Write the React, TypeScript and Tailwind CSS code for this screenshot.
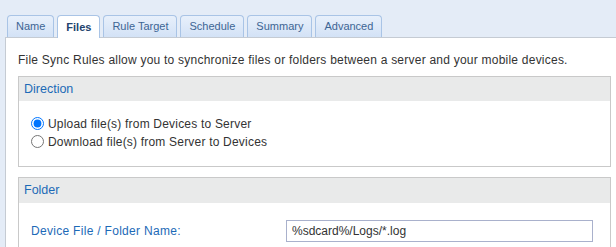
export default function App() {
  const tabs = ['Name', 'Files', 'Rule Target', 'Schedule', 'Summary', 'Advanced']
  return (
    <div
      className="w-[616px] h-[247px] overflow-hidden bg-[#e4ecf7] pl-[5px] pt-[15px]"
      style={{ fontFamily: '"Liberation Sans", Arial, sans-serif' }}
    >
      {/* Tab strip */}
      <div className="flex gap-[3px] pl-[2px] h-[22px] relative z-10">
        {tabs.map((t) => {
          const active = t === 'Files'
          return (
            <div
              key={t}
              className={
                active
                  ? 'h-[23px] px-[8px] flex items-center rounded-t-[4px] border border-b-0 border-[#a9c4e6] bg-white text-[11px] font-bold text-[#23446e]'
                  : 'h-[22px] px-[8px] flex items-center rounded-t-[4px] border border-b-0 border-[#a9c4e6] bg-gradient-to-b from-[#e8f0fb] to-[#d3e2f6] text-[11px] text-[#3d6594]'
              }
            >
              {t}
            </div>
          )
        })}
      </div>

      {/* Panel */}
      <div className="w-[618px] h-[240px] bg-white border-l border-t border-[#c5cbd3] px-[12px] pt-[14px]">
        <p className="text-[12px] text-[#333] leading-[16px] tracking-[0.23px]">
          File Sync Rules allow you to synchronize files or folders between a server and your mobile devices.
        </p>

        {/* Direction */}
        <div className="mt-[8px] h-[91px] border border-[#c9c9c9]">
          <div className="h-[24px] bg-[#e9eaea] flex items-center px-[5px] text-[12.5px] text-[#1d6ab7]">
            Direction
          </div>
          <div className="pt-[16px] pl-[12px] flex flex-col gap-[5px] text-[12px] text-[#333] tracking-[0.2px]">
            <label className="flex items-center gap-[4px] h-[13px]">
              <input type="radio" name="dir" defaultChecked className="m-0 w-[13px] h-[13px]" />
              Upload file(s) from Devices to Server
            </label>
            <label className="flex items-center gap-[4px] h-[13px]">
              <input type="radio" name="dir" className="m-0 w-[13px] h-[13px]" />
              Download file(s) from Server to Devices
            </label>
          </div>
        </div>

        {/* Folder */}
        <div className="mt-[10px] h-[90px] border border-[#c9c9c9]">
          <div className="h-[25px] bg-[#e9eaea] flex items-center px-[5px] text-[12.5px] text-[#1d6ab7]">
            Folder
          </div>
          <div className="pt-[17px] pl-[12px] flex items-center">
            <span className="w-[255px] text-[12px] text-[#1d6ab7] tracking-[0.3px]">Device File / Folder Name:</span>
            <div className="w-[307px] h-[22px] border border-[#a9b1cc] flex items-center px-[5px] text-[12px] text-[#333]">
              %sdcard%/Logs/*.log
            </div>
          </div>
        </div>
      </div>
    </div>
  )
}
